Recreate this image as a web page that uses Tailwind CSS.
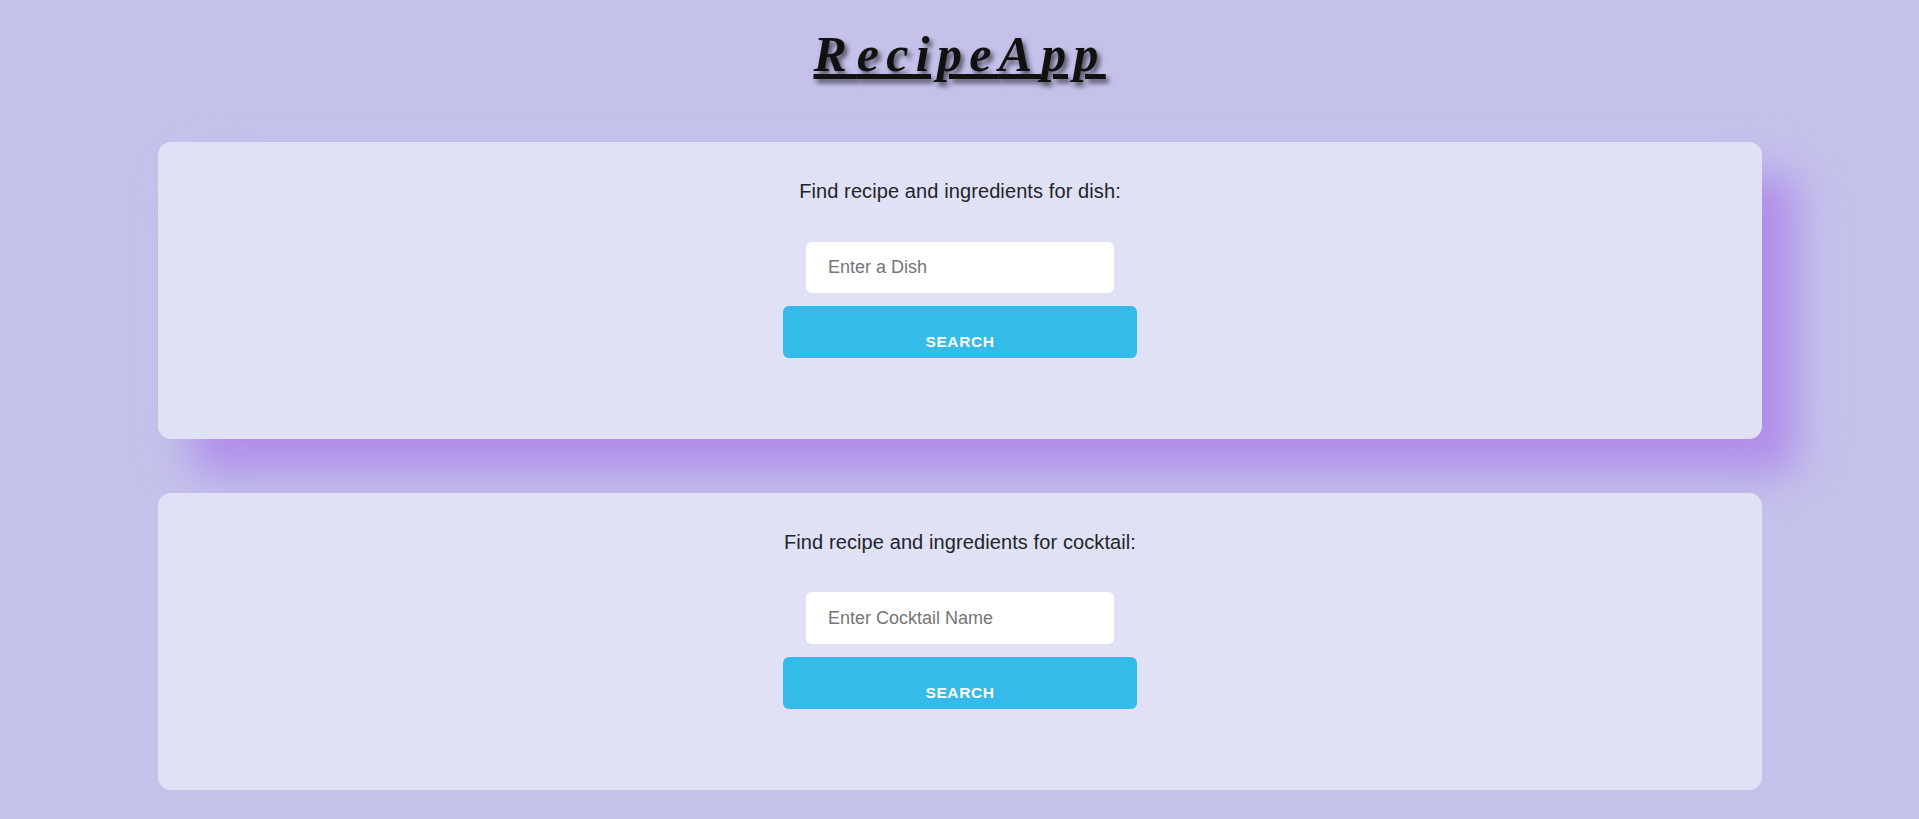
<!DOCTYPE html>
<html lang="en">
<head>
<meta charset="utf-8">
<title>RecipeApp</title>
<script src="https://cdn.jsdelivr.net/npm/@tailwindcss/browser@4"></script>
</head>
<body class="h-screen overflow-hidden bg-[#c4c2eb] font-['Liberation_Sans',Arial,sans-serif] text-[#212529]">
<header class="flex h-[142px] justify-center pt-[22px]">
<h1 class="h-16 w-[292px] whitespace-nowrap font-['Brush_Script_MT','Liberation_Serif',cursive] text-[50px] leading-[64px] font-bold italic tracking-[7.3px] text-[#111] underline decoration-[5px] underline-offset-[3px] [text-shadow:3px_4px_5px_rgba(0,0,0,0.6)]"><span class="tracking-[10px]">R</span>ecipe<span class="tracking-[9px]">A</span>pp</h1>
</header>
<main class="mx-auto flex w-[1604px] flex-col gap-[54px]">
<section class="flex h-[297px] flex-col items-center rounded-[13px] bg-[#e0e1f5] pt-[34px] shadow-[34px_34px_40px_#b28ee9,30px_30px_60px_#c0c2ee]">
<p class="h-[66px] pl-px text-[20px] leading-[30px] tracking-[0.1px]">Find recipe and ingredients for dish:</p>
<input class="h-[51px] w-[308px] rounded-md bg-white px-[22.5px] text-[18px] placeholder:text-[#757575]" placeholder="Enter a Dish">
<button class="mt-[13px] h-[52px] w-[354px] rounded-md bg-[#35bbe9] pt-5 pl-px text-[15.5px] font-bold tracking-[0.6px] text-white">SEARCH</button>
</section>
<section class="flex h-[297px] flex-col items-center rounded-[13px] bg-[#e0e1f5] pt-[34px]">
<p class="h-[65px] pl-px text-[20px] leading-[30px] tracking-[0.1px]">Find recipe and ingredients for cocktail:</p>
<input class="h-[52px] w-[308px] rounded-md bg-white px-[22.5px] text-[18px] placeholder:text-[#757575]" placeholder="Enter Cocktail Name">
<button class="mt-[13px] h-[52px] w-[354px] rounded-md bg-[#35bbe9] pt-5 pl-px text-[15.5px] font-bold tracking-[0.6px] text-white">SEARCH</button>
</section>
</main>
</body>
</html>
